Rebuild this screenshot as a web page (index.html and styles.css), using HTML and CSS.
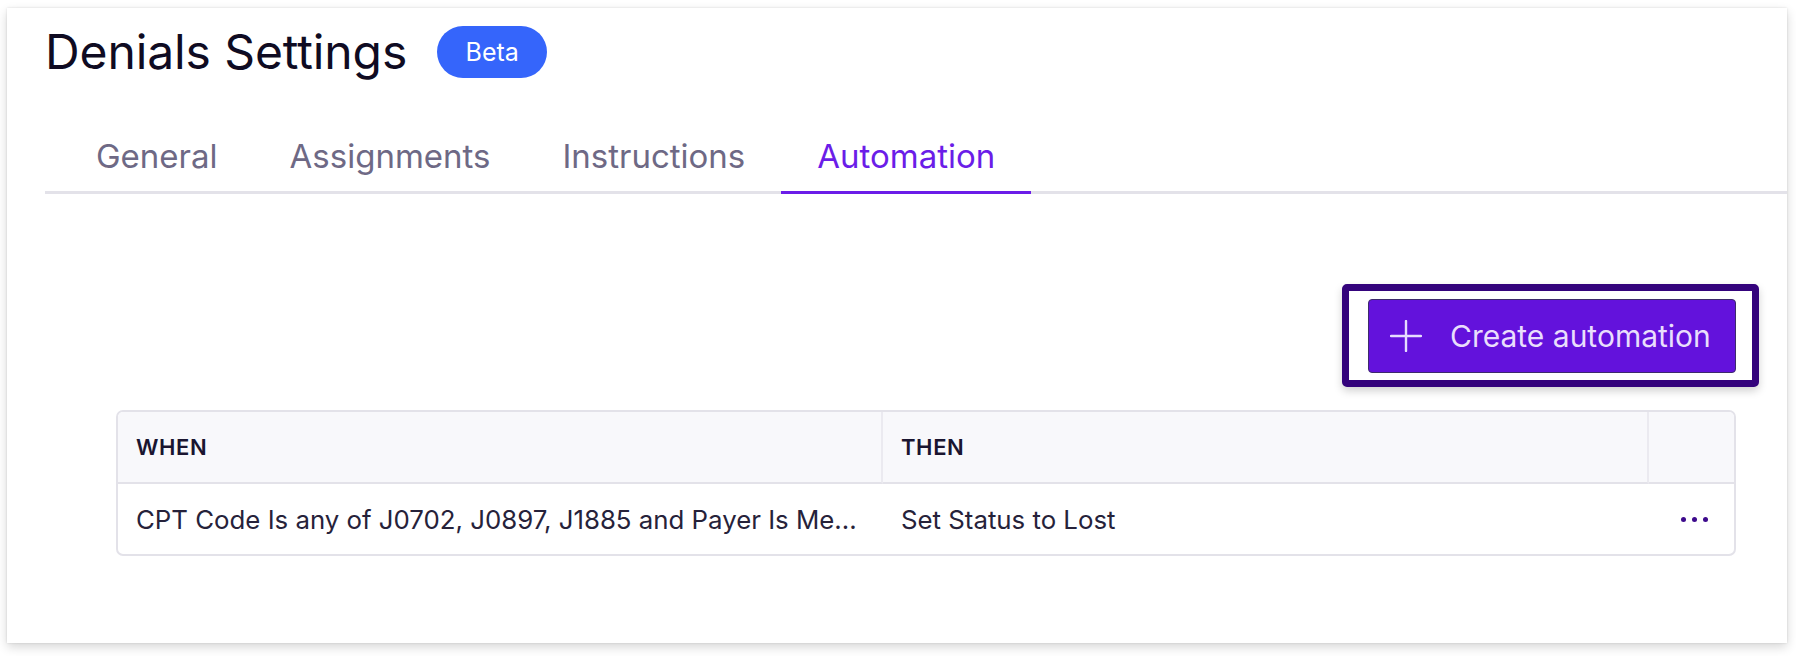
FILE: index.html
```html
<!DOCTYPE html>
<html lang="en">
<head>
<meta charset="utf-8">
<title>Denials Settings</title>
<link rel="stylesheet" href="styles.css">
</head>
<body>
<div class="card">
  <div class="header">
    <h1 class="title">Denials Settings</h1>
    <span class="badge">Beta</span>
  </div>
  <nav class="tabs">
    <a class="tab">General</a>
    <a class="tab">Assignments</a>
    <a class="tab">Instructions</a>
    <a class="tab active">Automation</a>
  </nav>
  <div class="content">
    <div class="actions">
      <div class="highlight">
        <button class="btn">
          <svg class="plus" width="32" height="32" viewBox="0 0 32 32"><path d="M16 1V31M1 16H31" stroke="currentColor" stroke-width="2.4" fill="none" stroke-linecap="round"/></svg>
          <span>Create automation</span>
        </button>
      </div>
    </div>
    <div class="table">
      <div class="th">WHEN</div>
      <div class="th">THEN</div>
      <div class="th th-last"></div>
      <div class="td">CPT Code Is any of J0702, J0897, J1885 and Payer Is Me...</div>
      <div class="td">Set Status to Lost</div>
      <div class="td td-menu"><span class="dots"><i></i><i></i><i></i></span></div>
    </div>
  </div>
</div>
</body>
</html>
```
FILE: styles.css
```css
html, body {
  margin: 0;
  padding: 0;
  background: #ffffff;
}
body {
  font-family: Inter, "Noto Sans", sans-serif;
  width: 1796px;
  height: 656px;
  overflow: hidden;
}
.card {
  margin: 8px 9px 0 7px;
  width: 1780px;
  height: 635px;
  background: #ffffff;
  box-shadow: 0 4px 10px rgba(0, 0, 0, 0.16), 0 0 2px rgba(0, 0, 0, 0.12);
  padding-top: 18px;
  box-sizing: border-box;
}
.header {
  display: flex;
  align-items: center;
  gap: 30px;
  height: 52px;
  padding-left: 38px;
}
.title {
  margin: 0;
  font-size: 48px;
  line-height: 52px;
  font-weight: 400;
  color: #0f0b22;
  letter-spacing: -0.1px;
}
.badge {
  display: inline-flex;
  align-items: center;
  justify-content: center;
  width: 110px;
  height: 52px;
  border-radius: 26px;
  background: #3565fb;
  color: #ffffff;
  font-size: 25px;
  font-weight: 400;
}
.tabs {
  display: flex;
  margin: 46px 0 0 38px;
  padding-left: 15px;
  border-bottom: 3px solid #e3e2e9;
}
.tab {
  display: block;
  padding: 12px 36px 15px;
  font-size: 33px;
  line-height: 40px;
  color: #6e6985;
  margin-bottom: -3px;
  border-bottom: 3px solid transparent;
}
.tab.active {
  color: #6b1de8;
  border-bottom-color: #6b1de8;
}
.content {
  padding: 0 51px 0 109px;
}
.actions {
  display: flex;
  justify-content: flex-end;
  margin-top: 105px;
}
.highlight {
  position: relative;
}
.highlight::before {
  content: "";
  position: absolute;
  left: -26px;
  right: -23px;
  top: -15px;
  bottom: -14px;
  border: 7px solid #34037c;
  border-radius: 5px;
  box-shadow: 0 4px 8px rgba(0, 0, 0, 0.18);
  background: #ffffff;
}
.btn {
  position: relative;
  display: flex;
  align-items: center;
  gap: 28px;
  height: 74px;
  width: 368px;
  box-sizing: border-box;
  padding: 0 29px 0 21px;
  background: #6312dc;
  border: 1px solid #3e2a6c;
  border-radius: 4px;
  color: #e9defc;
  font-family: Inter, "Noto Sans", sans-serif;
  font-size: 30px;
  font-weight: 400;
  white-space: nowrap;
}
.plus {
  flex: none;
  color: #e6dcff;
}
.table {
  margin-top: 37px;
  display: grid;
  grid-template-columns: 765px 766px 1fr;
  border: 2px solid #e3e2e9;
  border-radius: 7px;
  overflow: hidden;
}
.th {
  height: 70px;
  display: flex;
  align-items: center;
  padding-left: 18px;
  background: #f8f8fb;
  border-bottom: 2px solid #e3e2e9;
  border-right: 2px solid #ebeaf0;
  font-size: 22px;
  font-weight: 600;
  letter-spacing: 0.6px;
  color: #1a1530;
}
.th-last {
  border-right: none;
}
.td {
  height: 70px;
  display: flex;
  align-items: center;
  padding-left: 18px;
  font-size: 25.8px;
  color: #26223a;
  white-space: nowrap;
}
.td + .td {
  padding-left: 18px;
}
.td.td-menu {
  justify-content: center;
  padding-left: 6px;
}
.dots {
  display: flex;
  gap: 6px;
}
.dots i {
  display: block;
  width: 5px;
  height: 5px;
  border-radius: 50%;
  background: #3d0a8c;
}
```
